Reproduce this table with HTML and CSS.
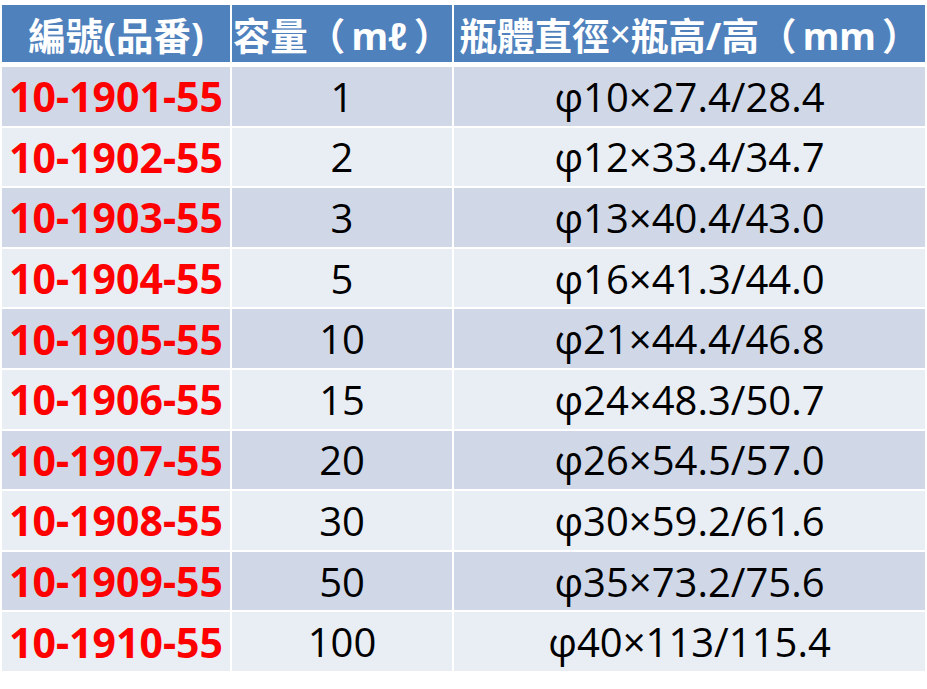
FILE: index.html
```html
<!DOCTYPE html>
<html lang="zh-Hant">
<head>
<meta charset="utf-8">
<link rel="stylesheet" href="styles.css">
</head>
<body>
<div class="table">
  <div class="row head">
    <div class="cell">編號(品番)</div>
    <div class="cell">容量（&#8198;mℓ&#8198;）</div>
    <div class="cell">瓶體直徑<span class="times">×</span>瓶高/高（&#8198;mm&#8198;）</div>
  </div>
  <div class="row odd"><div class="cell code">10-1901-55</div><div class="cell">1</div><div class="cell">φ10×27.4/28.4</div></div>
  <div class="row even"><div class="cell code">10-1902-55</div><div class="cell">2</div><div class="cell">φ12×33.4/34.7</div></div>
  <div class="row odd"><div class="cell code">10-1903-55</div><div class="cell">3</div><div class="cell">φ13×40.4/43.0</div></div>
  <div class="row even"><div class="cell code">10-1904-55</div><div class="cell">5</div><div class="cell">φ16×41.3/44.0</div></div>
  <div class="row odd"><div class="cell code">10-1905-55</div><div class="cell">10</div><div class="cell">φ21×44.4/46.8</div></div>
  <div class="row even"><div class="cell code">10-1906-55</div><div class="cell">15</div><div class="cell">φ24×48.3/50.7</div></div>
  <div class="row odd"><div class="cell code">10-1907-55</div><div class="cell">20</div><div class="cell">φ26×54.5/57.0</div></div>
  <div class="row even"><div class="cell code">10-1908-55</div><div class="cell">30</div><div class="cell">φ30×59.2/61.6</div></div>
  <div class="row odd"><div class="cell code">10-1909-55</div><div class="cell">50</div><div class="cell">φ35×73.2/75.6</div></div>
  <div class="row even"><div class="cell code">10-1910-55</div><div class="cell">100</div><div class="cell">φ40×113/115.4</div></div>
</div>
</body>
</html>
```
FILE: styles.css
```css
html, body {
  margin: 0;
  padding: 0;
  background: #ffffff;
}
body {
  font-family: "Open Sans", "Noto Sans", "Noto Sans CJK TC", sans-serif;
}
.table {
  margin: 5px 0 0 2px;
  width: 923px;
  display: flex;
  flex-direction: column;
  gap: 2px;
}
.row {
  display: grid;
  grid-template-columns: 228px 220px 471px;
  column-gap: 2px;
  height: 58.6px;
}
.row.head {
  height: 57px;
  margin-bottom: 3px;
}
.cell {
  display: flex;
  align-items: center;
  justify-content: center;
  font-size: 40px;
  color: #000000;
  white-space: nowrap;
}
.head .cell {
  background: #4f81bd;
  color: #ffffff;
  font-weight: bold;
  font-size: 37.5px;
  font-family: "Noto Sans", "Noto Sans CJK TC", sans-serif;
}
.head .times {
  font-weight: normal;
}
.odd .cell { background: #d0d8e8; }
.even .cell { background: #e9edf4; }
.cell.code {
  color: #ff0000;
  font-weight: bold;
  font-size: 41px;
  font-family: "Noto Sans", sans-serif;
}
```
